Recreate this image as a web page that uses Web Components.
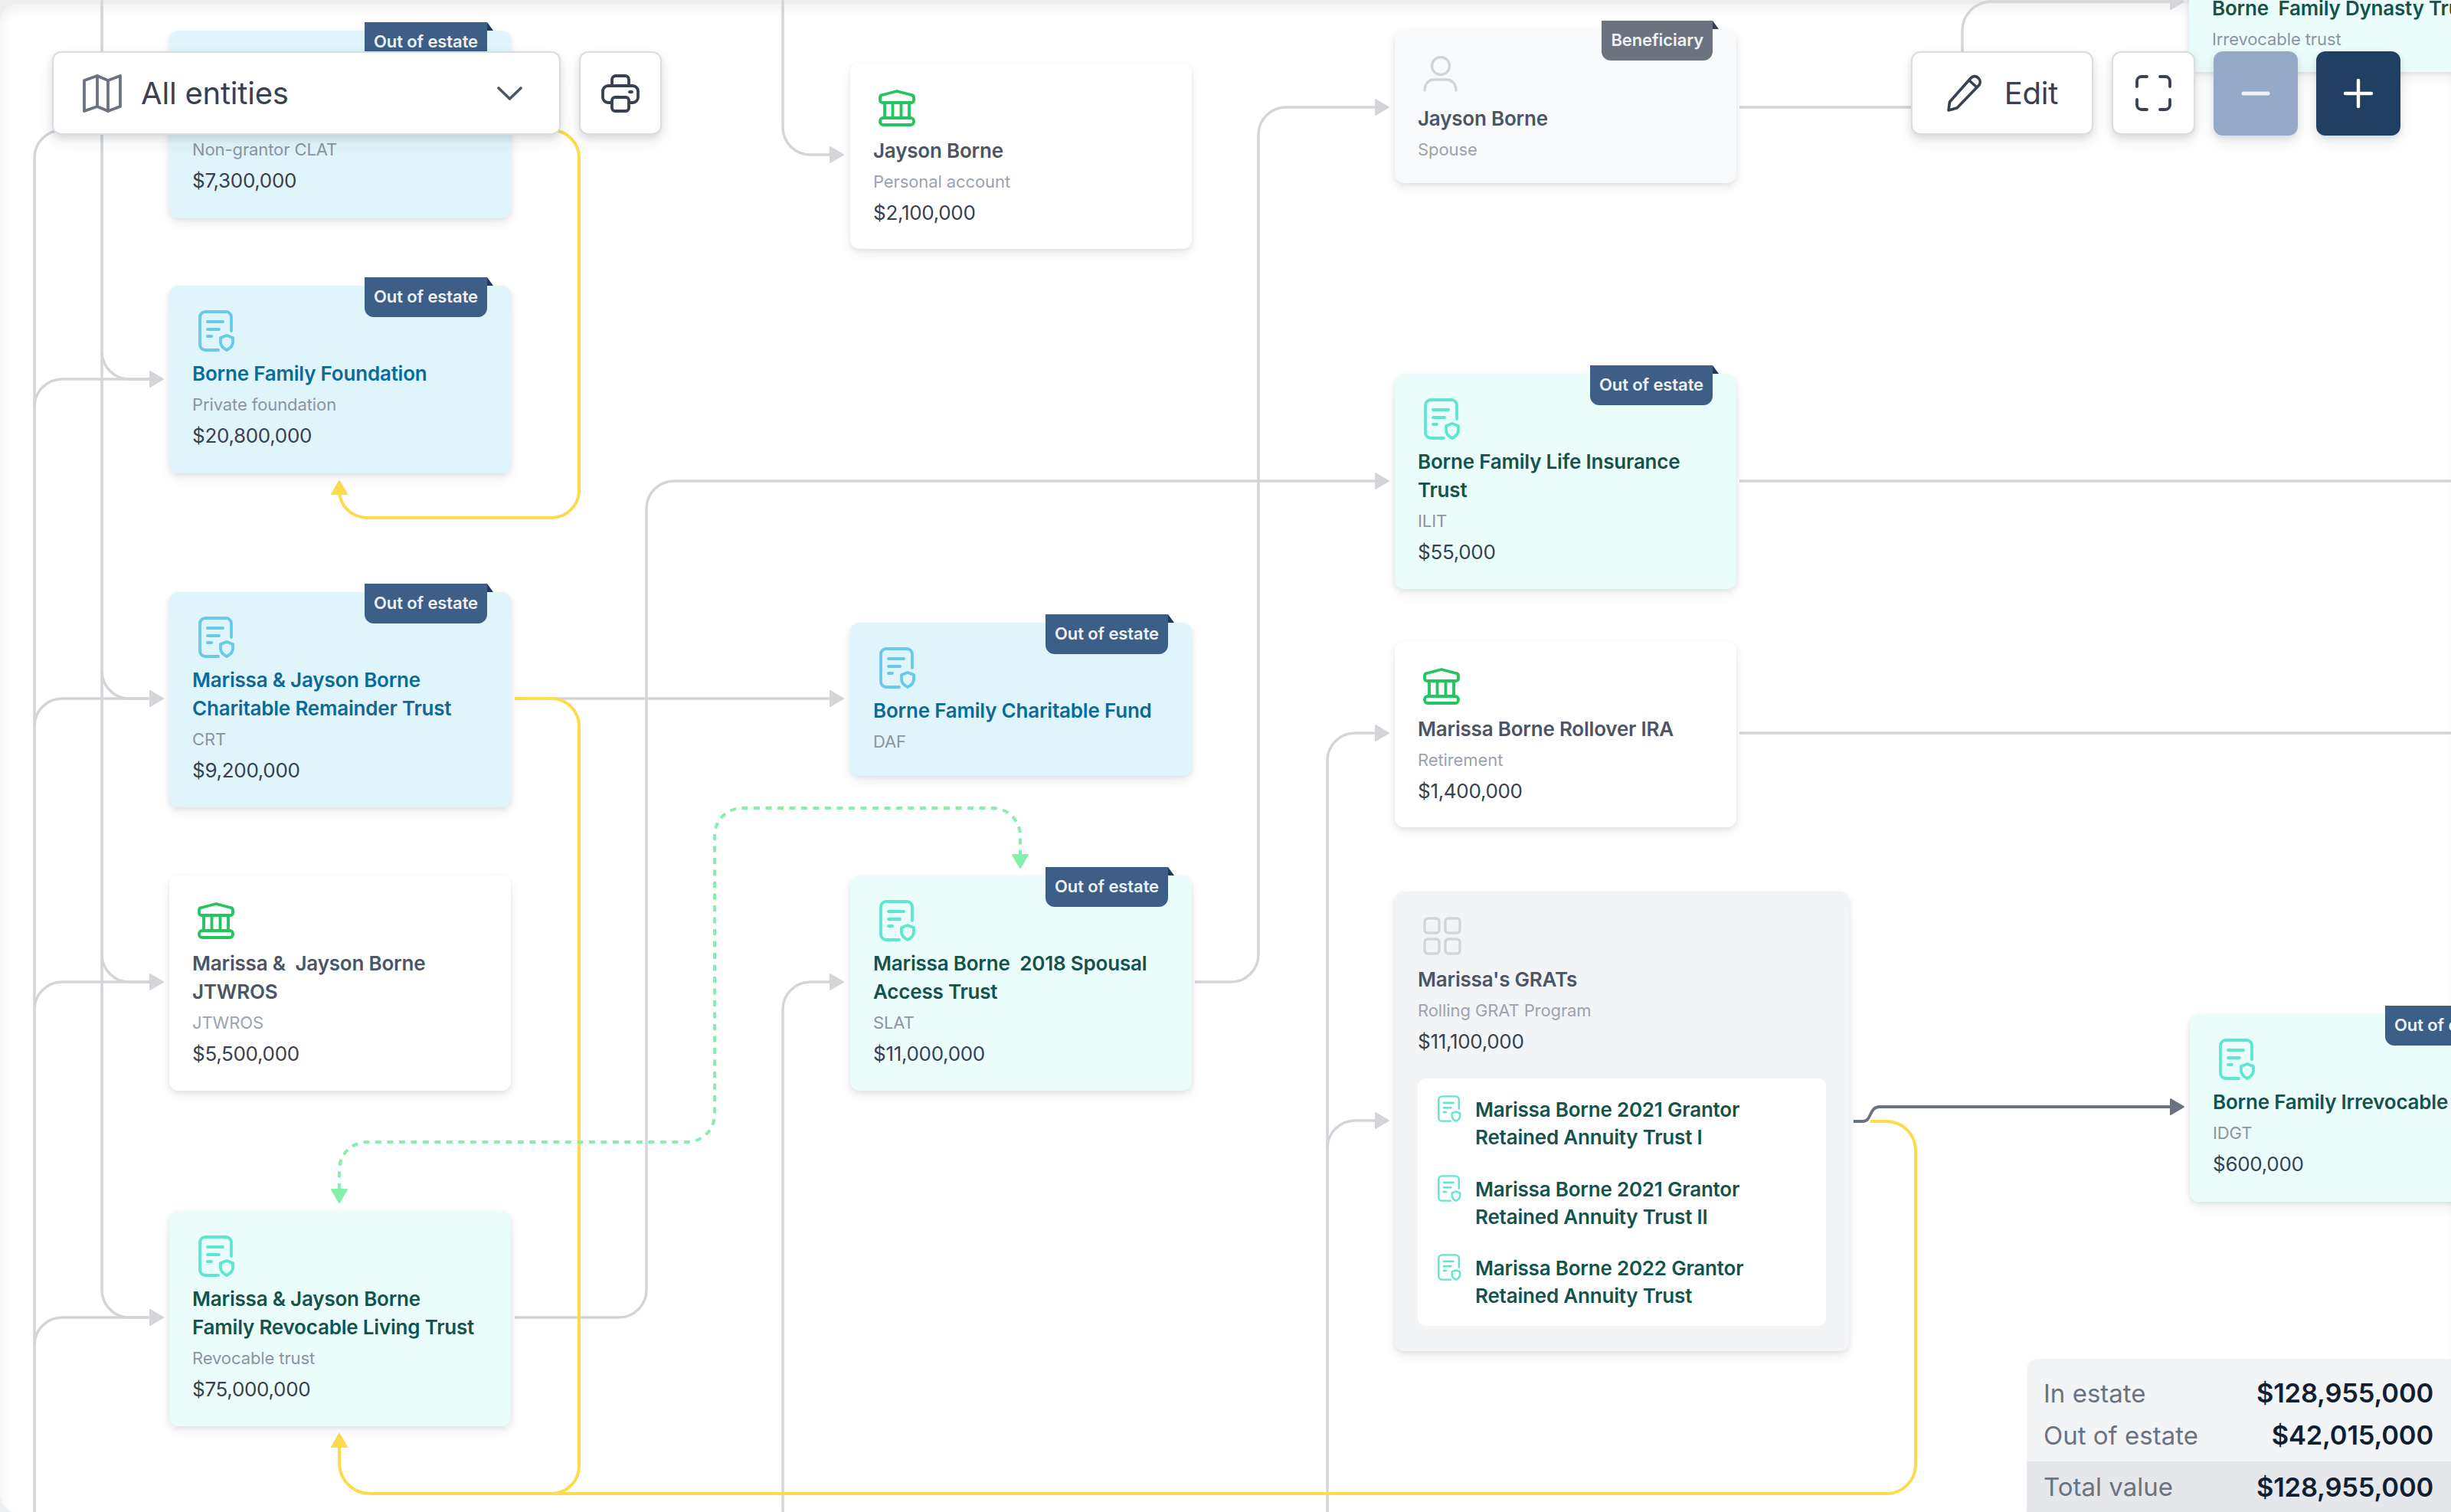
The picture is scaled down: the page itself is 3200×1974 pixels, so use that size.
<!DOCTYPE html>
<html lang="en"><head><meta charset="utf-8"><title>Estate map</title>
<style>html,body{margin:0;padding:0;background:#fff}body{width:3200px;height:1974px;overflow:hidden}</style>
</head><body>
<estate-map>
  <estate-edges></estate-edges>

  <entity-card kind="blue" style="--x:221;--y:40;--h:245"><status-tag slot="badge">Out of estate</status-tag><span slot="name">&nbsp;</span><span slot="sub">Non-grantor CLAT</span><span slot="value">$7,300,000</span></entity-card>
  <entity-card kind="blue" icon="doc" style="--x:221;--y:373;--h:245"><status-tag slot="badge">Out of estate</status-tag><span slot="name">Borne Family Foundation</span><span slot="sub">Private foundation</span><span slot="value">$20,800,000</span></entity-card>
  <entity-card kind="blue" icon="doc" style="--x:221;--y:773;--h:281"><status-tag slot="badge">Out of estate</status-tag><span slot="name">Marissa &amp; Jayson Borne<br>Charitable Remainder Trust</span><span slot="sub">CRT</span><span slot="value">$9,200,000</span></entity-card>
  <entity-card kind="white" icon="bank" style="--x:221;--y:1143;--h:281"><span slot="name">Marissa &amp;  Jayson Borne<br>JTWROS</span><span slot="sub">JTWROS</span><span slot="value">$5,500,000</span></entity-card>
  <entity-card kind="mint" icon="doc" style="--x:221;--y:1581;--h:281"><span slot="name">Marissa &amp; Jayson Borne<br>Family Revocable Living Trust</span><span slot="sub">Revocable trust</span><span slot="value">$75,000,000</span></entity-card>

  <entity-card kind="white" icon="bank" style="--x:1110;--y:82;--h:243"><span slot="name">Jayson Borne</span><span slot="sub">Personal account</span><span slot="value">$2,100,000</span></entity-card>
  <entity-card kind="blue" icon="doc" style="--x:1110;--y:813;--h:200"><status-tag slot="badge">Out of estate</status-tag><span slot="name">Borne Family Charitable Fund</span><span slot="sub">DAF</span></entity-card>
  <entity-card kind="mint" icon="doc" style="--x:1110;--y:1143;--h:281"><status-tag slot="badge">Out of estate</status-tag><span slot="name">Marissa Borne  2018 Spousal<br>Access Trust</span><span slot="sub">SLAT</span><span slot="value">$11,000,000</span></entity-card>

  <entity-card kind="person" icon="person" style="--x:1821;--y:38;--h:201"><status-tag slot="badge" tone="gray">Beneficiary</status-tag><span slot="name">Jayson Borne</span><span slot="sub">Spouse</span></entity-card>
  <entity-card kind="mint" icon="doc" style="--x:1821;--y:488;--h:281"><status-tag slot="badge">Out of estate</status-tag><span slot="name">Borne Family Life Insurance<br>Trust</span><span slot="sub">ILIT</span><span slot="value">$55,000</span></entity-card>
  <entity-card kind="white" icon="bank" style="--x:1821;--y:837;--h:243"><span slot="name">Marissa Borne Rollover IRA</span><span slot="sub">Retirement</span><span slot="value">$1,400,000</span></entity-card>

  <entity-card kind="group" icon="grid" style="--x:1821;--y:1164;--h:600;--w:593"><span slot="name">Marissa's GRATs</span><span slot="sub">Rolling GRAT Program</span><span slot="value">$11,100,000</span>
    <grat-list>
      <grat-item>Marissa Borne 2021 Grantor<br>Retained Annuity Trust I</grat-item>
      <grat-item>Marissa Borne 2021 Grantor<br>Retained Annuity Trust II</grat-item>
      <grat-item>Marissa Borne 2022 Grantor<br>Retained Annuity Trust</grat-item>
    </grat-list>
  </entity-card>

  <entity-card kind="mint" icon="doc" style="--x:2859;--y:1324;--h:245"><status-tag slot="badge">Out of estate</status-tag><span slot="name">Borne Family Irrevocable Trust</span><span slot="sub">IDGT</span><span slot="value">$600,000</span></entity-card>
  <entity-card kind="mint" style="--x:2858;--y:-104;--h:198"><span slot="name">Borne  Family Dynasty Trust</span><span slot="sub">Irrevocable trust</span></entity-card>

  <tool-bar style="--x:68;--y:67">
    <tool-button style="--bw:664px;--pad:0 48px 0 38px;--gap:25px">
      <svg width="51" height="50" viewBox="0 0 51 50" fill="none" stroke="#6b7280" stroke-width="3.8" stroke-linejoin="round" stroke-linecap="round"><path d="M2 8 19 2 33 8 49 2V42L33 48 19 42 2 48Z"/><path d="M19 2V42M33 8V48"/></svg>
      <span>All entities</span>
      <svg style="margin-left:auto" width="33" height="18" viewBox="0 0 33 18" fill="none" stroke="#4b5563" stroke-width="3.6" stroke-linecap="round" stroke-linejoin="round"><path d="M2 2 16.500 16 31 2"/></svg>
    </tool-button>
    <tool-button style="--bw:108px">
      <svg width="50" height="50" viewBox="0 0 50 50" fill="none" stroke="#374151" stroke-width="3.8" stroke-linecap="round" stroke-linejoin="round"><path d="M14 15V7a5 5 0 0 1 5-5h12a5 5 0 0 1 5 5v8"/><path d="M13 37H9a7 7 0 0 1-7-7V22a7 7 0 0 1 7-7h32a7 7 0 0 1 7 7v8a7 7 0 0 1-7 7h-4"/><rect x="14" y="30" width="22" height="18" rx="4"/><path d="M37 23h3"/></svg>
    </tool-button>
  </tool-bar>

  <tool-bar style="--x:2495;--y:67">
    <tool-button style="--bw:238px;--gap:27px">
      <svg width="49" height="50" viewBox="0 0 49 50" fill="none" stroke="#374151" stroke-width="3.6" stroke-linecap="round" stroke-linejoin="round"><path d="M3 47l1.500-11L32 5a6.500 6.500 0 0 1 10 0 7 7 0 0 1 1 9L14 44Z"/><path d="M30 8l10 9"/></svg>
      <span>Edit</span>
    </tool-button>
    <tool-button style="--bw:109px">
      <svg width="47" height="47" viewBox="0 0 47 47" fill="none" stroke="#374151" stroke-width="3.8" stroke-linecap="round"><path d="M2 15V8a6 6 0 0 1 6-6h7M32 2h7a6 6 0 0 1 6 6v7M45 32v7a6 6 0 0 1-6 6h-7M15 45H8a6 6 0 0 1-6-6v-7"/></svg>
    </tool-button>
    <tool-button tone="soft" style="--bw:110px">
      <svg width="38" height="6" viewBox="0 0 38 6" fill="none" stroke="#eef2f7" stroke-width="5" stroke-linecap="round"><path d="M3 3H35"/></svg>
    </tool-button>
    <tool-button tone="strong" style="--bw:110px">
      <svg width="40" height="40" viewBox="0 0 40 40" fill="none" stroke="#fff" stroke-width="4.4" stroke-linecap="round"><path d="M3 20H37M20 3V37"/></svg>
    </tool-button>
  </tool-bar>

  <estate-summary>
    <summary-row><span slot="label">In estate</span><span slot="amount">$128,955,000</span></summary-row>
    <summary-row><span slot="label">Out of estate</span><span slot="amount">$42,015,000</span></summary-row>
    <summary-row total><span slot="label">Total value</span><span slot="amount">$128,955,000</span></summary-row>
  </estate-summary>
</estate-map>

<script>
const FONT = '"Inter","Liberation Sans",sans-serif';

const ICONS = {
  doc: c => `<svg class="doc" width="48" height="54" viewBox="0 0 48 54" fill="none" stroke="${c}" stroke-width="3.800" stroke-linecap="round" stroke-linejoin="round"><path d="M26 52H9a7 7 0 0 1-7-7V9a7 7 0 0 1 7-7h27a7 7 0 0 1 7 7V27"/><path d="M12 15H32M12 25H27M12 34H17"/><path d="M37 33l8 3v6c0 5-4 8-8 10-4-2-8-5-8-10v-6Z"/></svg>`,
  bank: c => `<svg class="bank" width="48" height="48" viewBox="0 0 48 48" fill="none" stroke="${c}" stroke-width="3.800" stroke-linecap="round" stroke-linejoin="round"><path d="M24 2 43 7a3.500 3.500 0 0 1 3 3.500V14a3 3 0 0 1-3 3H5a3 3 0 0 1-3-3V10.500A3.500 3.500 0 0 1 5 7Z"/><path d="M8 17V37M18.500 17V37M29.500 17V37M40 17V37"/><rect x="2" y="37" width="44" height="9" rx="4"/></svg>`,
  person: c => `<svg class="person" width="45" height="47" viewBox="0 0 45 47" fill="none" stroke="${c}" stroke-width="3.4" stroke-linecap="round"><circle cx="23" cy="13" r="11.500"/><path d="M2 45C2 36 8 31 14 31H31C37 31 43 36 43 45"/></svg>`,
  grid: c => `<svg class="grid" width="50" height="50" viewBox="0 0 50 50" fill="none" stroke="${c}" stroke-width="3.4"><rect x="2" y="2" width="19" height="19" rx="4"/><rect x="29" y="2" width="19" height="19" rx="4"/><rect x="2" y="29" width="19" height="19" rx="4"/><rect x="29" y="29" width="19" height="19" rx="4"/></svg>`
};
const KINDS = {
  blue:  {bg:'#e0f4fb', title:'#0d6a96', icon:'#69c9ea', sub:'#8b95a1', value:'#374151'},
  mint:  {bg:'#ebfdfa', title:'#14534b', icon:'#5fe6cf', sub:'#8b95a1', value:'#374151'},
  white: {bg:'#ffffff', title:'#4b5563', icon:'#22c55e', sub:'#9ca3af', value:'#374151'},
  person:{bg:'#f9fafb', title:'#4b5563', icon:'#d1d5db', sub:'#9ca3af', value:'#374151'},
  group: {bg:'#f3f4f6', title:'#4b5563', icon:'#d1d5db', sub:'#9ca3af', value:'#374151'}
};

class EstateMap extends HTMLElement {
  constructor(){ super();
    this.attachShadow({mode:'open'}).innerHTML = `<style>
      :host{display:block;position:relative;width:3200px;height:1974px;overflow:hidden;background:#eceef0;font-family:${FONT}}
      .paper{position:absolute;inset:5px 0 -1px 0;background:#fff;border-radius:24px;box-shadow:inset 3px 8px 14px rgba(17,24,39,.05)}
    </style><div class="paper"></div><slot></slot>`;
  }
}

class EstateEdges extends HTMLElement {
  constructor(){ super();
    const arrowR = (x,y,c='#d1d5db') => `<path d="M${x} ${y} l-17 -10 v20 Z" fill="${c}" stroke="${c}" stroke-width="2" stroke-linejoin="round"/>`;
    const gray = [
      'M133 0V1684A36 36 0 0 0 169 1720H200',
      'M133 459A36 36 0 0 0 169 495H200','M133 876A36 36 0 0 0 169 912H200','M133 1246A36 36 0 0 0 169 1282H200',
      'M45 1974V206A36 36 0 0 1 81 170H120',
      'M45 531A36 36 0 0 1 81 495H200','M45 948A36 36 0 0 1 81 912H200','M45 1318A36 36 0 0 1 81 1282H200','M45 1756A36 36 0 0 1 81 1720H200',
      'M672 1720H808A36 36 0 0 0 844 1684V664A36 36 0 0 1 880 628H1800',
      'M672 912H1088',
      'M1022 0V166A36 36 0 0 0 1058 202H1088',
      'M1022 1974V1318A36 36 0 0 1 1058 1282H1088',
      'M1560 1282H1607A36 36 0 0 0 1643 1246V176A36 36 0 0 1 1679 140H1800',
      'M1733 1974V1499A36 36 0 0 1 1769 1463H1800',
      'M1733 1499V993A36 36 0 0 1 1769 957H1800',
      'M2271 140H2510','M2271 628H3200','M2271 957H3200',
      'M2562 80V40A38 38 0 0 1 2600 2H2836'
    ];
    const tips = [[213,495],[213,912],[213,1282],[213,1720],[1101,912],[1101,202],[1101,1282],[1813,628],[1813,140],[1813,1463],[1813,957],[2851,2]];
    this.attachShadow({mode:'open'}).innerHTML = `<style>
      :host{display:block;position:absolute;inset:0}
      svg{display:block}
    </style>
    <svg width="3200" height="1974" viewBox="0 0 3200 1974" fill="none">
      <g stroke="#d3d5d9" stroke-width="3.500">${gray.map(d=>`<path d="${d}"/>`).join('')}</g>
      ${tips.map(t=>arrowR(t[0],t[1],'#d3d5d9')).join('')}
      <path d="M2420 1464H2432C2444 1464 2440 1445 2454 1445H2838" stroke="#6b7280" stroke-width="3.800"/>
      ${arrowR(2851,1445,'#6b7280')}
      <g stroke="#fcdc4d" stroke-width="4">
        <path d="M720 170A36 36 0 0 1 756 206V640A36 36 0 0 1 720 676H479A36 36 0 0 1 443 640"/>
        <path d="M672 912H720A36 36 0 0 1 756 948V1914A36 36 0 0 1 720 1950"/>
        <path d="M443 1888V1910A40 40 0 0 0 483 1950H2463A38 38 0 0 0 2501 1912V1502A38 38 0 0 0 2463 1464H2442"/>
      </g>
      <path d="M443 628l-10 17h20Z M443 1872l-10 17h20Z" fill="#fcdc4d" stroke="#fcdc4d" stroke-width="2" stroke-linejoin="round"/>
      <path d="M1332 1118V1091A36 36 0 0 0 1296 1055H969A36 36 0 0 0 933 1091V1455A36 36 0 0 1 897 1491H479A36 36 0 0 0 443 1527V1556" stroke="#86efac" stroke-width="4" stroke-dasharray="8 7.500"/>
      <path d="M1332 1133l-10 -17h20Z M443 1570l-10 -17h20Z" fill="#86efac" stroke="#86efac" stroke-width="2" stroke-linejoin="round"/>
    </svg>`;
  }
}

class EntityCard extends HTMLElement {
  constructor(){ super(); this.attachShadow({mode:'open'}); }
  connectedCallback(){
    const kind = this.getAttribute('kind');
    const k = KINDS[kind] || KINDS.white;
    const ic = this.getAttribute('icon');
    this.shadowRoot.innerHTML = `<style>
      :host{display:block;position:absolute;left:calc(var(--x)*1px);top:calc(var(--y)*1px);width:calc(var(--w,446)*1px);height:calc(var(--h)*1px);box-sizing:border-box;
        padding:28px 30px 0;background:${k.bg};border-radius:12px;box-shadow:0 3px 6px rgba(31,41,55,.10),0 8px 18px rgba(31,41,55,.05);font-family:${FONT}}
      .icon{height:60px;margin-bottom:${kind==='person'?11:9}px;margin-left:7px;display:flex;align-items:center}
      .icon svg{display:block}
      .icon svg.bank{margin-top:2px}
      .icon svg.doc{margin:2px 0 0 1px}
      .name{font-size:26px;line-height:36.500px;font-weight:600;letter-spacing:-.2px;color:${k.title};white-space:pre-wrap}
      .sub{font-size:22px;line-height:36px;margin-top:3.500px;font-weight:400;color:${k.sub};letter-spacing:-.1px}
      .value{font-size:26px;line-height:36px;margin-top:5px;font-weight:400;color:${k.value};letter-spacing:-.3px}
      ::slotted(grat-list){margin-top:30px}
      .badge{position:absolute;top:-11px;right:31px}
    </style>
    <div class="icon">${ic ? ICONS[ic](k.icon) : ''}</div>
    <div class="name"><slot name="name"></slot></div>
    <div class="sub"><slot name="sub"></slot></div>
    <div class="value"><slot name="value"></slot></div>
    <slot></slot>
    <div class="badge"><slot name="badge"></slot></div>`;
  }
}

class StatusTag extends HTMLElement {
  constructor(){ super(); this.attachShadow({mode:'open'}); }
  connectedCallback(){
    const gray = this.getAttribute('tone')==='gray';
    const bg = gray ? '#6b7280' : '#3d5f87', dk = gray ? '#374151' : '#1e3a5f';
    this.shadowRoot.innerHTML = `<style>
      :host{display:block;position:relative;box-sizing:border-box;height:52px;padding:0 12px;line-height:50px;background:${bg};color:#eef1f5;
        font-size:22px;font-weight:600;letter-spacing:-.1px;border-radius:0 0 12px 12px;white-space:nowrap;font-family:${FONT}}
      .fold{position:absolute;left:100%;top:0;width:8px;height:11px;background:${dk};clip-path:polygon(0 0,100% 100%,0 100%)}
    </style><slot></slot><span class="fold"></span>`;
  }
}

class GratList extends HTMLElement {
  constructor(){ super();
    this.attachShadow({mode:'open'}).innerHTML = `<style>
      :host{display:flex;flex-direction:column;gap:31.500px;box-sizing:border-box;padding:23px 0 21px 26px;background:#fff;border-radius:10px;font-family:${FONT}}
    </style><slot></slot>`;
  }
}
class GratItem extends HTMLElement {
  constructor(){ super();
    this.attachShadow({mode:'open'}).innerHTML = `<style>
      :host{display:flex;gap:18px;align-items:flex-start;font-size:26px;line-height:36px;font-weight:600;letter-spacing:-.2px;color:#14534b}
      svg{display:block;flex:none;margin-top:-1px}
    </style>${ICONS.doc('#5fe6cf').replace('width="48" height="54"','width="31" height="35"')}<div><slot></slot></div>`;
  }
}

class ToolBar extends HTMLElement {
  constructor(){ super();
    this.attachShadow({mode:'open'}).innerHTML = `<style>
      :host{display:flex;gap:24px;position:absolute;left:calc(var(--x)*1px);top:calc(var(--y)*1px)}
    </style><slot></slot>`;
  }
}
class ToolButton extends HTMLElement {
  constructor(){ super(); this.attachShadow({mode:'open'}); }
  connectedCallback(){
    const t = this.getAttribute('tone');
    const skin = t==='soft' ? 'background:#95aac9;border:0;height:110px;'
               : t==='strong' ? 'background:#203f63;border:0;height:110px;'
               : 'background:#fff;border:2px solid #d9dce1;height:109px;';
    this.shadowRoot.innerHTML = `<style>
      :host{display:flex;align-items:center;justify-content:center;gap:var(--gap,0);box-sizing:border-box;width:var(--bw);padding:var(--pad,0);${skin}
        border-radius:12px;box-shadow:0 4px 8px rgba(31,41,55,.12),0 10px 22px rgba(31,41,55,.07);
        font-family:${FONT};font-size:40px;font-weight:400;color:#374151;letter-spacing:-.2px}
      ::slotted(svg){display:block;flex:none}
    </style><slot></slot>`;
  }
}

class EstateSummary extends HTMLElement {
  constructor(){ super();
    this.attachShadow({mode:'open'}).innerHTML = `<style>
      :host{position:absolute;left:2646px;top:1774px;width:554px;height:200px;box-sizing:border-box;padding-top:17px;background:#f3f4f6;border-radius:14px 0 0 0;overflow:hidden;display:flex;flex-direction:column;font-family:${FONT}}
    </style><slot></slot>`;
  }
}
class SummaryRow extends HTMLElement {
  constructor(){ super();
    this.attachShadow({mode:'open'}).innerHTML = `<style>
      :host{display:flex;justify-content:space-between;align-items:center;height:55px;padding:0 23px 0 22px;font-size:33px;color:#6b7280}
      :host([total]){height:66px;margin-top:auto;background:#e5e7eb}
      .a{font-size:34.500px;font-weight:600;color:#111f33;letter-spacing:-.2px}
    </style><span><slot name="label"></slot></span><span class="a"><slot name="amount"></slot></span>`;
  }
}

for (const [n,c] of Object.entries({
  'estate-map':EstateMap,'estate-edges':EstateEdges,'entity-card':EntityCard,'status-tag':StatusTag,
  'grat-list':GratList,'grat-item':GratItem,'tool-bar':ToolBar,'tool-button':ToolButton,
  'estate-summary':EstateSummary,'summary-row':SummaryRow})) customElements.define(n,c);
</script>
</body></html>
